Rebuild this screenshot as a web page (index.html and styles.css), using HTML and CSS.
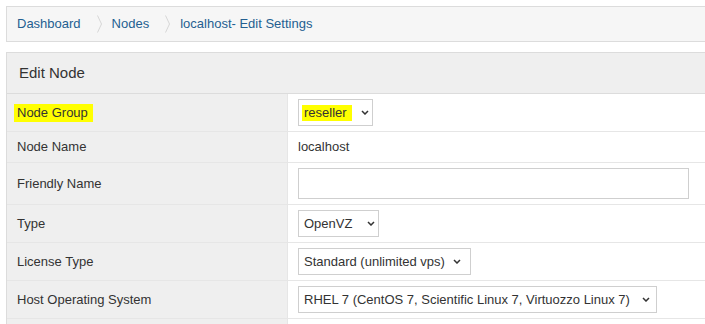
FILE: index.html
```html
<!DOCTYPE html>
<html lang="en">
<head>
  <meta charset="UTF-8">
  <title>localhost- Edit Settings</title>
  <link rel="stylesheet" href="styles.css">
</head>
<body>
  <div class="breadcrumb">
    <a href="#">Dashboard</a>
    <svg class="sep" width="5" height="18" viewBox="0 0 5 18"><polyline points="0.5,0.5 4.5,9 0.5,17.5" fill="none" stroke="#d6d6d6" stroke-width="1"/></svg>
    <a href="#">Nodes</a>
    <svg class="sep" width="5" height="18" viewBox="0 0 5 18"><polyline points="0.5,0.5 4.5,9 0.5,17.5" fill="none" stroke="#d6d6d6" stroke-width="1"/></svg>
    <a href="#">localhost- Edit Settings</a>
  </div>

  <div class="panel">
    <div class="panel-heading">Edit Node</div>

    <div class="row">
      <div class="label"><span class="mark">Node Group</span></div>
      <div class="value">
        <div class="select w-group">
          <span class="val"><span class="mark mark-val">reseller</span></span>
          <svg class="chev" width="8" height="5" viewBox="0 0 8 5"><polyline points="1,1 4,4 7,1" fill="none" stroke="#333" stroke-width="1.5"/></svg>
        </div>
      </div>
    </div>

    <div class="row">
      <div class="label">Node Name</div>
      <div class="value">localhost</div>
    </div>

    <div class="row">
      <div class="label">Friendly Name</div>
      <div class="value"><input type="text" class="text-input"></div>
    </div>

    <div class="row">
      <div class="label">Type</div>
      <div class="value">
        <div class="select w-type">
          <span class="val">OpenVZ</span>
          <svg class="chev" width="8" height="5" viewBox="0 0 8 5"><polyline points="1,1 4,4 7,1" fill="none" stroke="#333" stroke-width="1.5"/></svg>
        </div>
      </div>
    </div>

    <div class="row">
      <div class="label">License Type</div>
      <div class="value">
        <div class="select w-license">
          <span class="val">Standard (unlimited vps)</span>
          <svg class="chev" width="8" height="5" viewBox="0 0 8 5"><polyline points="1,1 4,4 7,1" fill="none" stroke="#333" stroke-width="1.5"/></svg>
        </div>
      </div>
    </div>

    <div class="row">
      <div class="label">Host Operating System</div>
      <div class="value">
        <div class="select w-os">
          <span class="val">RHEL 7 (CentOS 7, Scientific Linux 7, Virtuozzo Linux 7)</span>
          <svg class="chev" width="8" height="5" viewBox="0 0 8 5"><polyline points="1,1 4,4 7,1" fill="none" stroke="#333" stroke-width="1.5"/></svg>
        </div>
      </div>
    </div>

    <div class="row row-empty">
      <div class="label"></div>
      <div class="value"></div>
    </div>
  </div>
</body>
</html>
```

FILE: styles.css
```css
html, body {
  margin: 0;
  overflow: hidden;
}
body {
  font-family: "Liberation Sans", Arial, sans-serif;
  font-size: 13px;
  line-height: 20px;
  color: #333;
  background: #fff;
  padding: 6px 0 0 6px;
  height: 318px;
}
.breadcrumb {
  display: flex;
  align-items: center;
  padding: 7px 10px;
  background-color: #f6f6f6;
  border: 1px solid #dcdcdc;
  border-right: none;
}
.breadcrumb a {
  color: #245f91;
  text-decoration: none;
}
.breadcrumb .sep {
  margin: 0 10px 0 16px;
}
.panel {
  margin-top: 10px;
  border-top: 1px solid #dcdcdc;
  border-left: 1px solid #dcdcdc;
}
.panel-heading {
  background-color: #efefef;
  padding: 10px 12px;
  font-size: 15px;
  border-bottom: 1px solid #dcdcdc;
}
.row {
  display: grid;
  grid-template-columns: 281px 1fr;
  border-bottom: 1px solid #e6e6e6;
}
.label {
  display: flex;
  align-items: center;
  background-color: #efefef;
  padding: 5px 10px;
  border-right: 1px solid #e6e6e6;
}
.value {
  display: flex;
  align-items: center;
  padding: 5px 10px;
}
.row-empty .label,
.row-empty .value {
  min-height: 20px;
}
.mark {
  background-color: #ffff00;
  padding: 0 5px 0 3px;
  margin-left: -3px;
  line-height: 18px;
}
.mark-val {
  padding: 0 5px 0 2px;
  margin-left: -2px;
  line-height: 16px;
  display: inline-block;
}
.select {
  display: flex;
  align-items: center;
  box-sizing: border-box;
  height: 27px;
  border: 1px solid #cfcfcf;
  padding-left: 5px;
  background: #fff;
}
.select .val {
  white-space: nowrap;
}
.select .chev {
  flex-shrink: 0;
  margin-left: 3px;
}
.w-group { width: 75px; }
.w-group .val { width: 54px; }
.w-type { width: 81px; }
.w-type .val { width: 60px; }
.w-license { width: 173px; }
.w-license .val { width: 146px; }
.w-os { width: 359px; }
.w-os .val { width: 335px; }
.text-input {
  box-sizing: border-box;
  width: 391px;
  height: 31px;
  margin: 0;
  border: 1px solid #cfcfcf;
  padding: 4px 6px;
  font: inherit;
}
```
